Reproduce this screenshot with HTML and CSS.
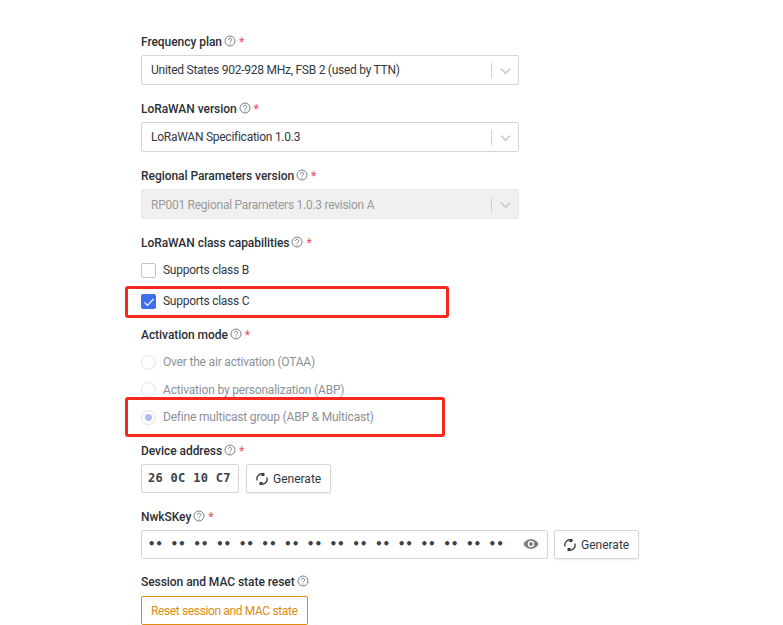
FILE: index.html
```html
<!DOCTYPE html>
<html lang="en">
<head>
<meta charset="utf-8">
<title>Device form</title>
<link rel="stylesheet" href="styles.css">
</head>
<body>
<svg class="defs" width="0" height="0" aria-hidden="true">
  <symbol id="help" viewBox="0 0 12 12"><circle cx="6" cy="6" r="5" fill="none" stroke="currentColor" stroke-width=".9"/><path d="M4.300 4.800a1.700 1.600 0 1 1 2.600 1.400c-.6.400-.9.600-.9 1.300" fill="none" stroke="currentColor" stroke-width=".9"/><circle cx="6" cy="9" r=".6" fill="currentColor"/></symbol>
  <symbol id="chev" viewBox="0 0 12 8"><path d="M1 1.500l5 5 5-5" fill="none" stroke="currentColor" stroke-width="2"/></symbol>
  <symbol id="sync" viewBox="0 0 14 14"><path d="M2.200 8.600A5 5 0 0 1 9.500 2.600M11.800 5.400A5 5 0 0 1 4.500 11.400" fill="none" stroke="currentColor" stroke-width="1.300"/><path d="M9.200.3v3.800h-3.400zM4.800 13.700V9.900h3.400z" fill="currentColor"/></symbol>
</svg>
<main class="form">
  <div class="label">Frequency plan <svg class="help"><use href="#help"/></svg> <span class="req">*</span></div>
  <div class="select"><span class="value">United States 902-928 MHz, FSB 2 (used by TTN)</span><span class="sep"></span><svg class="chev"><use href="#chev"/></svg></div>

  <div class="label">LoRaWAN version <svg class="help"><use href="#help"/></svg> <span class="req">*</span></div>
  <div class="select"><span class="value">LoRaWAN Specification 1.0.3</span><span class="sep"></span><svg class="chev"><use href="#chev"/></svg></div>

  <div class="label">Regional Parameters version <svg class="help"><use href="#help"/></svg> <span class="req">*</span></div>
  <div class="select disabled"><span class="value">RP001 Regional Parameters 1.0.3 revision A</span><span class="sep"></span><svg class="chev"><use href="#chev"/></svg></div>

  <div class="label">LoRaWAN class capabilities <svg class="help"><use href="#help"/></svg> <span class="req">*</span></div>
  <div class="check-group">
    <div class="option"><span class="box"></span>Supports class B</div>
    <div class="option"><span class="box checked"><svg viewBox="0 0 16 16" width="16" height="16"><path d="M3.500 8.300l3 3 6-6.300" fill="none" stroke="#fff" stroke-width="1.200"/></svg></span>Supports class C</div>
    <div class="mark mark-c"></div>
  </div>

  <div class="label label-activation">Activation mode <svg class="help"><use href="#help"/></svg> <span class="req">*</span></div>
  <div class="radio-group">
    <div class="option off"><span class="radio"></span>Over the air activation (OTAA)</div>
    <div class="option off"><span class="radio"></span>Activation by personalization (ABP)</div>
    <div class="option off"><span class="radio on"></span>Define multicast group (ABP &amp; Multicast)</div>
    <div class="mark mark-m"></div>
  </div>

  <div class="label label-device">Device address <svg class="help"><use href="#help"/></svg> <span class="req">*</span></div>
  <div class="row">
    <div class="input addr">26 0C 10 C7</div>
    <button class="btn"><svg class="sync"><use href="#sync"/></svg>Generate</button>
  </div>

  <div class="label label-key">NwkSKey <svg class="help"><use href="#help"/></svg> <span class="req">*</span></div>
  <div class="row row-key">
    <div class="input key"><span class="dots">•• •• •• •• •• •• •• •• •• •• •• •• •• •• •• ••</span>
      <svg class="eye" viewBox="0 0 16 12" width="16" height="12"><path fill-rule="evenodd" d="M8 1C4.500 1 1.800 3.200.5 6c1.300 2.800 4 5 7.500 5s6.200-2.200 7.500-5C14.200 3.200 11.500 1 8 1zm0 8.200a3.200 3.200 0 1 1 0-6.400 3.200 3.200 0 0 1 0 6.400z"/><circle cx="8" cy="6" r="1.900"/></svg>
    </div>
    <button class="btn"><svg class="sync"><use href="#sync"/></svg>Generate</button>
  </div>

  <div class="label label-session">Session and MAC state reset <svg class="help"><use href="#help"/></svg></div>
  <button class="btn warn">Reset session and MAC state</button>
</main>
</body>
</html>
```
FILE: styles.css
```css
* { box-sizing: border-box; }
html, body { margin: 0; height: 100%; overflow: hidden; background: #fff; }
body { font: 12px/16px Roboto, "Noto Sans", sans-serif; color: #33383f; }
.defs { position: absolute; }
.form { width: 510px; margin-left: 141px; padding-top: 34px; display: flex; flex-direction: column; align-items: flex-start; }
.label { height: 16px; margin-bottom: 5px; font-weight: 500; letter-spacing: -.05px; color: #2b2f36; white-space: nowrap; display: flex; align-items: center; gap: 2px; }
.help { width: 12px; height: 12px; color: #6e7278; margin-top: -2px; }
.req { color: #ef5a6c; margin-left: 1px; }
.select { width: 378px; height: 30px; border: 1px solid #d6d6d6; border-radius: 2px; margin-bottom: 16px; padding-left: 9px; display: flex; align-items: center; }
.select .value { flex: 1; letter-spacing: -.26px; }
.sep { width: 1px; height: 15px; background: #d0d0d0; }
.chev { width: 11px; height: 8px; margin: 1px 7px 0 8px; color: #cccccc; }
.select.disabled { background: #f0f0f0; border-color: #e8e8e8; color: #9a9a9a; }
.select.disabled .value { padding-top: 1px; }
.check-group, .radio-group { position: relative; align-self: stretch; }
.option { display: flex; align-items: center; gap: 7px; height: 16px; white-space: nowrap; letter-spacing: -.26px; }
.check-group .option { margin-bottom: 15px; }
.check-group { margin-top: 6px; height: 59px; }
.box { width: 15px; height: 15px; border: 1px solid #c4c4c4; border-radius: 2px; background: #fff; display: block; }
.box.checked { background: #3e6fef; border-color: #3e6fef; position: relative; }
.box.checked svg { position: absolute; left: -1px; top: -1px; }
.label-activation { margin-top: 6px; margin-bottom: 11px; }
.radio-group .option { margin-bottom: 11.500px; color: #8c9096; letter-spacing: -.19px; }
.radio { width: 15px; height: 15px; border: 1px solid #e2e2e2; border-radius: 50%; background: #fff; display: flex; align-items: center; justify-content: center; }
.radio.on::after { content: ""; width: 7px; height: 7px; border-radius: 50%; background: #a9bcf5; }
.mark { position: absolute; border: 3px solid #f5281e; border-radius: 3px; pointer-events: none; }
.mark-c { left: -16px; top: 24px; width: 324px; height: 32px; }
.mark-m { left: -16px; top: 43px; width: 320px; height: 40px; }
.label-device { margin-top: 6px; margin-bottom: 5px; }
.row { display: flex; gap: 7px; align-items: flex-start; }
.row-key { gap: 6px; }
.input { height: 29px; border: 1px solid #d6d6d6; border-radius: 2px; background: #fff; display: flex; align-items: center; }
.addr { width: 98px; padding-left: 6px; font: 700 12px/16px "DejaVu Sans Mono", monospace; letter-spacing: .3px; color: #3c4046; }
.key { width: 407px; padding: 0 8px 0 6px; justify-content: space-between; }
.dots { font: 700 12px/16px "DejaVu Sans Mono", monospace; letter-spacing: .35px; color: #3c4046; white-space: pre; }
.eye { fill: #7c7c7c; flex: none; }
.btn { height: 29px; padding: 1px 9px 0 8px; border: 1px solid #d6d6d6; border-radius: 2px; background: #fff; box-shadow: 0 1px 2px rgba(0,0,0,.08); font: inherit; color: #33383f; display: flex; align-items: center; gap: 4px; white-space: nowrap; }
.sync { width: 14px; height: 14px; color: #33383f; }
.label-key { margin-top: 16px; margin-bottom: 5px; }
.label-session { margin-top: 15px; margin-bottom: 6px; }
.warn { border-color: #db8d12; color: #db8d12; box-shadow: none; padding: 1px 9px 0; letter-spacing: -.37px; }
```
